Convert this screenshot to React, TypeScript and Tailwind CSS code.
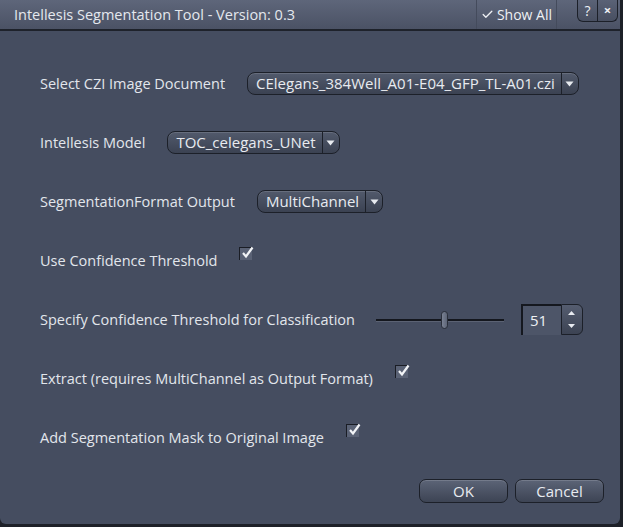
import { Check } from 'lucide-react';

const font = { fontFamily: '"Open Sans", "Noto Sans", sans-serif' };

function Dropdown({ value }: { value: string }) {
  return (
    <div className="flex h-[23px] items-stretch whitespace-nowrap rounded-[8px] border border-[#1c2029] bg-gradient-to-b from-[#525a6c] to-[#3b4252] text-[15px] leading-none text-[#e8ebf0] shadow-[inset_0_1px_0_rgba(255,255,255,0.12)]">
      <span className="flex items-center pl-[8px] pr-[6px]">{value}</span>
      <span className="flex w-[17px] items-center justify-center border-l border-[#1c2029]">
        <svg width="9" height="6" viewBox="0 0 9 6">
          <path d="M0.5 0.5h8L4.5 5.5z" fill="#e8ebf0" />
        </svg>
      </span>
    </div>
  );
}

function CheckBox() {
  return (
    <div className="relative ml-[22px] mb-[14px] h-[13px] w-[13px] shrink-0 border-l border-t border-[#1a1d25] bg-[#5a6275]">
      <svg
        className="absolute -top-[2px] left-[1px]"
        width="13"
        height="13"
        viewBox="0 0 13 13"
      >
        <path
          d="M2 7l3 3.5L11.5 1.5"
          fill="none"
          stroke="#f2f4f7"
          strokeWidth="2.2"
        />
      </svg>
    </div>
  );
}

function Row({ children }: { children: React.ReactNode }) {
  return <div className="flex h-[59px] items-center whitespace-nowrap">{children}</div>;
}

function Btn({ label }: { label: string }) {
  return (
    <button className="flex h-[24px] w-[89px] items-center justify-center rounded-[7px] border border-[#1c2029] bg-gradient-to-b from-[#5c6477] to-[#3d4454] text-[15px] leading-none text-[#e8ebf0] shadow-[inset_0_1px_0_rgba(255,255,255,0.15)]">
      {label}
    </button>
  );
}

export default function App() {
  return (
    <div className="h-[527px] w-[623px] overflow-hidden bg-[#1d2028]" style={font}>
      <div className="flex h-[524px] w-[620px] flex-col overflow-hidden rounded-b-[6px] bg-[#454d60] text-[#e2e6ec]">
        {/* title bar */}
        <div className="flex h-[31px] items-stretch border-b-2 border-[#1e222b] bg-gradient-to-b from-[#5e667a] to-[#4b5265]">
          <div className="flex flex-1 items-center whitespace-nowrap pl-[14px] text-[14.5px] text-[#e4e8ee]">
            Intellesis Segmentation Tool - Version: 0.3
          </div>
          <div className="flex items-center gap-[3px] whitespace-nowrap border-x border-[#444b5c] px-[4px] text-[14px] text-[#eef0f4]">
            <Check size={13} strokeWidth={2.4} />
            Show All
          </div>
          <div className="ml-[20px] flex h-[22px] w-[41px] rounded-b-[6px] border border-t-0 border-[#1c2029] bg-gradient-to-b from-[#5a6276] to-[#484f61] text-[14px] leading-none text-[#eef0f4]">
            <span className="flex flex-1 items-center justify-center border-r border-[#1c2029]">?</span>
            <span className="flex flex-1 items-center justify-center text-[13px] font-bold">×</span>
          </div>
          <div className="w-[2px]" />
        </div>

        {/* body */}
        <div className="flex flex-col pl-[40px] pt-[23px] text-[14.5px]">
          <Row>
            <span>Select CZI Image Document</span>
            <div className="ml-[22px]">
              <Dropdown value="CElegans_384Well_A01-E04_GFP_TL-A01.czi" />
            </div>
          </Row>
          <Row>
            <span>Intellesis Model</span>
            <div className="ml-[22px]">
              <Dropdown value="TOC_celegans_UNet" />
            </div>
          </Row>
          <Row>
            <span>SegmentationFormat Output</span>
            <div className="ml-[22px]">
              <Dropdown value="MultiChannel" />
            </div>
          </Row>
          <Row>
            <span>Use Confidence Threshold</span>
            <CheckBox />
          </Row>
          <Row>
            <span>Specify Confidence Threshold for Classification</span>
            <div className="relative ml-[21px] flex h-[20px] w-[128px] shrink-0 items-center">
              <div className="h-[2px] w-full bg-[#14171e] shadow-[0_1px_0_rgba(255,255,255,0.12)]" />
              <div className="absolute left-[65px] top-[1px] h-[18px] w-[7px] rounded-full border border-[#2a2f3a] bg-gradient-to-r from-[#7a8294] to-[#5d6577]" />
            </div>
            <div className="ml-[17px] flex h-[31px] w-[62px] shrink-0">
              <div className="flex w-[40px] items-center border-l-2 border-t-2 border-[#15181f] bg-[#4d5568] pl-[7px] text-[15px] text-[#eef0f4]">
                51
              </div>
              <div className="flex flex-1 flex-col items-center justify-center gap-[9px] rounded-r-[6px] border border-[#1c2029] bg-gradient-to-b from-[#555d70] to-[#3c4353]">
                <svg width="7" height="4" viewBox="0 0 7 4">
                  <path d="M0 4h7L3.5 0z" fill="#e8ebf0" />
                </svg>
                <svg width="7" height="4" viewBox="0 0 7 4">
                  <path d="M0 0h7L3.5 4z" fill="#e8ebf0" />
                </svg>
              </div>
            </div>
          </Row>
          <Row>
            <span>Extract (requires MultiChannel as Output Format)</span>
            <CheckBox />
          </Row>
          <Row>
            <span>Add Segmentation Mask to Original Image</span>
            <CheckBox />
          </Row>
          <div className="mt-[12px] flex justify-end gap-[7px] pr-[16px]">
            <Btn label="OK" />
            <Btn label="Cancel" />
          </div>
        </div>
      </div>
    </div>
  );
}
